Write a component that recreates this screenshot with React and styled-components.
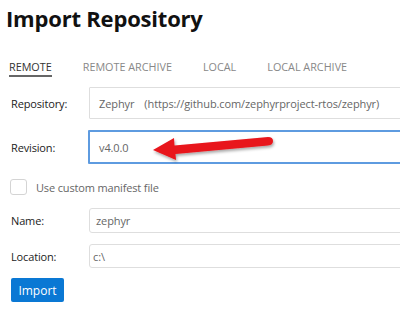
import React from "react";
import styled, { createGlobalStyle } from "styled-components";

const GlobalStyle = createGlobalStyle`
  body {
    margin: 0;
    background: #fff;
    font-family: "Open Sans", "Noto Sans", sans-serif;
    color: #222;
  }
`;

const Page = styled.div`
  width: 400px;
  height: 319px;
  overflow: hidden;
  padding: 3px 0 0 10px;
  box-sizing: border-box;
`;

const Title = styled.h1`
  margin: 0 0 0 -4px;
  font-size: 22px;
  line-height: 30px;
  font-weight: 700;
  color: #111;
  letter-spacing: -0.2px;
`;

const Tabs = styled.div`
  display: flex;
  gap: 31px;
  margin-top: 27px;
  margin-left: -1px;
`;

const Tab = styled.div`
  font-size: 10.8px;
  line-height: 14px;
  padding-bottom: 1px;
  color: ${({ active }) => (active ? "#333" : "#888")};
  border-bottom: 2px solid ${({ active }) => (active ? "#666" : "transparent")};
`;

const Form = styled.div`
  display: flex;
  flex-direction: column;
  margin-top: 10px;
`;

const Row = styled.div`
  position: relative;
  display: grid;
  grid-template-columns: 79px 1fr;
  align-items: center;
  margin-top: ${({ mt }) => mt || 0}px;
`;

const Label = styled.label`
  font-size: 11px;
  letter-spacing: -0.15px;
  padding-left: 1px;
  color: #222;
`;

const Input = styled.div`
  height: ${({ h }) => h}px;
  box-sizing: border-box;
  display: flex;
  align-items: center;
  gap: 10px;
  padding-left: ${({ pad }) => pad}px;
  margin-right: -20px;
  border: ${({ focused }) => (focused ? "2px solid #5e9be0" : "1px solid #dedede")};
  border-radius: ${({ radius }) => radius || 1}px;
  font-size: 11px;
  letter-spacing: -0.1px;
  color: #666;
  white-space: nowrap;
  overflow: hidden;
`;

const CheckRow = styled.div`
  display: flex;
  align-items: center;
  gap: 9px;
  margin-top: 15px;
  font-size: 11px;
  letter-spacing: -0.15px;
  color: #666;
`;

const Box = styled.span`
  width: 17px;
  height: 16px;
  box-sizing: border-box;
  border: 1px solid #d4d4d4;
  border-radius: 3px;
  background: #fff;
`;

const Button = styled.button`
  align-self: flex-start;
  margin-top: 10px;
  margin-left: 1px;
  width: 53px;
  height: 24px;
  border: none;
  border-radius: 2px;
  background: #0a78d4;
  color: #fff;
  font-family: inherit;
  font-size: 12px;
  padding: 0;
`;

const Arrow = styled.svg`
  position: absolute;
  left: 138px;
  top: -2px;
  overflow: visible;
`;

function RedArrow() {
  return (
    <Arrow width="130" height="34" viewBox="138 128 130 34">
      <defs>
        <filter id="sh" x="-20%" y="-50%" width="140%" height="200%">
          <feDropShadow dx="1" dy="2" stdDeviation="1.5" floodColor="#000" floodOpacity="0.35" />
        </filter>
      </defs>
      <g filter="url(#sh)" fill="#e8141b">
        <path d="M143 150 L164 138 L164.5 145.5 L258 137 Q263 137 263 141 Q263 145 258 145.5 L165.5 154 L166 160 Z" />
      </g>
    </Arrow>
  );
}

export default function App() {
  return (
    <Page>
      <GlobalStyle />
      <Title>Import Repository</Title>
      <Tabs>
        <Tab active>REMOTE</Tab>
        <Tab>REMOTE ARCHIVE</Tab>
        <Tab>LOCAL</Tab>
        <Tab>LOCAL ARCHIVE</Tab>
      </Tabs>
      <Form>
        <Row>
          <Label>Repository:</Label>
          <Input h={32} pad={9}>
            <span>Zephyr</span>
            <span>(https://github.com/zephyrproject-rtos/zephyr)</span>
          </Input>
        </Row>
        <Row mt={11}>
          <Label>Revision:</Label>
          <Input h={34} pad={9} focused style={{ marginLeft: "-1px" }}>
            v4.0.0
          </Input>
          <RedArrow />
        </Row>
        <CheckRow>
          <Box />
          Use custom manifest file
        </CheckRow>
        <Row mt={13}>
          <Label>Name:</Label>
          <Input h={25} pad={6} radius={3}>zephyr</Input>
        </Row>
        <Row mt={11}>
          <Label>Location:</Label>
          <Input h={24} pad={3} radius={3}>c:\</Input>
        </Row>
        <Button>Import</Button>
      </Form>
    </Page>
  );
}
